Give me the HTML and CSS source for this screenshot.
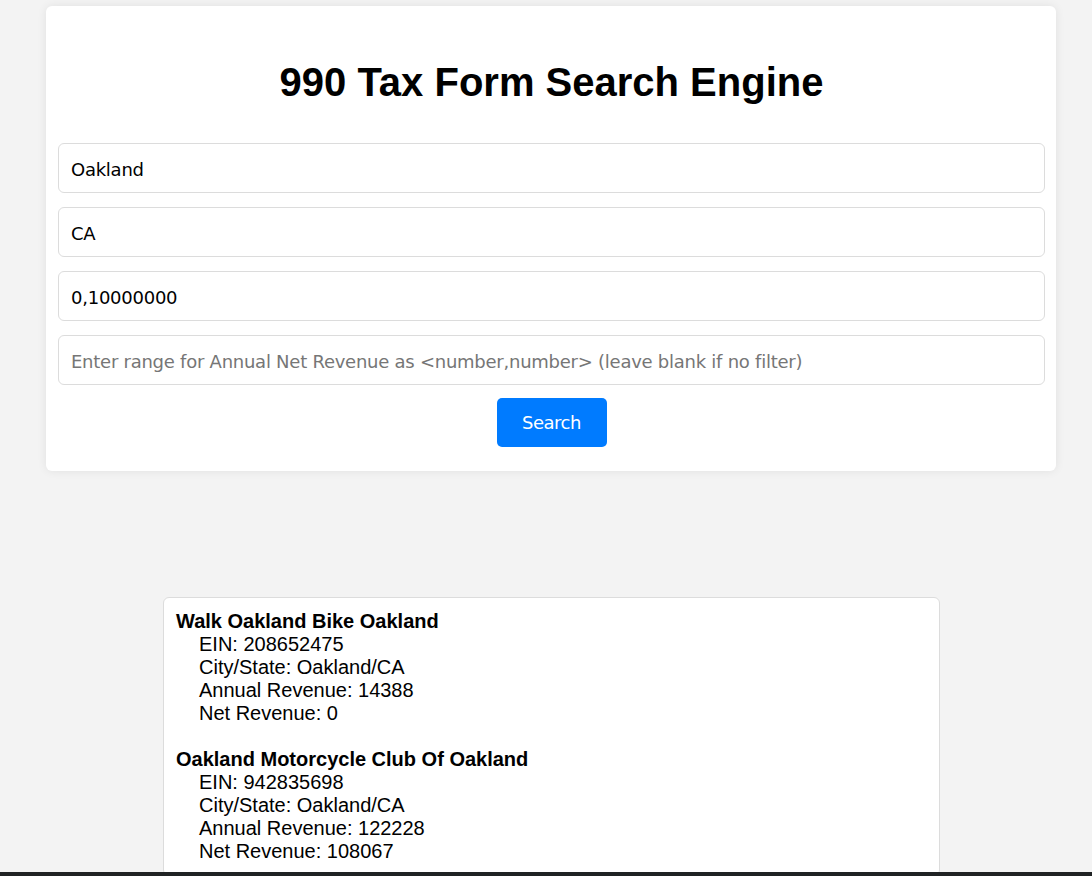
FILE: index.html
```html
<!DOCTYPE html>
<html lang="en">
<head>
<meta charset="utf-8">
<title>990 Tax Form Search Engine</title>
<link rel="stylesheet" href="styles.css">
</head>
<body>
<div class="page">
  <div class="card">
    <h1 class="title">990 Tax Form Search Engine</h1>
    <form class="search-form">
      <input class="field" type="text" value="Oakland">
      <input class="field" type="text" value="CA">
      <input class="field" type="text" value="0,10000000">
      <input class="field" type="text" placeholder="Enter range for Annual Net Revenue as &lt;number,number&gt; (leave blank if no filter)">
      <button class="search-btn" type="button">Search</button>
    </form>
  </div>
  <div class="results">
    <div class="entry">
      <div class="entry-name">Walk Oakland Bike Oakland</div>
      <div class="entry-line">EIN: 208652475</div>
      <div class="entry-line">City/State: Oakland/CA</div>
      <div class="entry-line">Annual Revenue: 14388</div>
      <div class="entry-line">Net Revenue: 0</div>
    </div>
    <div class="entry">
      <div class="entry-name">Oakland Motorcycle Club Of Oakland</div>
      <div class="entry-line">EIN: 942835698</div>
      <div class="entry-line">City/State: Oakland/CA</div>
      <div class="entry-line">Annual Revenue: 122228</div>
      <div class="entry-line">Net Revenue: 108067</div>
    </div>
  </div>
</div>
<div class="bottom-bar"></div>
</body>
</html>
```
FILE: styles.css
```css
html, body {
  margin: 0;
  padding: 0;
}
body {
  background: #f3f3f3;
  font-family: "Liberation Sans", Arial, sans-serif;
  color: #000;
}
.page {
  padding-top: 6px;
  display: flex;
  flex-direction: column;
  align-items: center;
  padding-left: 10px;
}
.card {
  width: 1010px;
  box-sizing: border-box;
  background: #fff;
  border-radius: 6px;
  box-shadow: 0 0 10px rgba(0, 0, 0, 0.08);
  padding: 12px 11px 24px 12px;
}
.title {
  margin: 41px 0 38px;
  font-size: 40px;
  font-weight: bold;
  text-align: center;
  line-height: 46px;
}
.search-form {
  display: flex;
  flex-direction: column;
  align-items: center;
  gap: 14px;
}
.field {
  width: 100%;
  height: 50px;
  box-sizing: border-box;
  border: 1px solid #dcdcdc;
  border-radius: 6px;
  padding: 3px 12px 0;
  font-family: "DejaVu Sans", Verdana, sans-serif;
  font-size: 18px;
  letter-spacing: -0.25px;
  color: #000;
  background: #fff;
  outline: none;
}
.field::placeholder {
  color: #767676;
}
.search-btn {
  margin-top: -1px;
  width: 110px;
  height: 49px;
  border: none;
  border-radius: 5px;
  background: #007bff;
  color: #fff;
  font-family: "DejaVu Sans", Verdana, sans-serif;
  font-size: 18px;
  letter-spacing: -0.5px;
  cursor: pointer;
}
.results {
  margin-top: 126px;
  width: 777px;
  box-sizing: border-box;
  background: #fff;
  border: 1px solid #dcdcdc;
  border-radius: 6px;
  padding: 12px 12px 12px;
  font-size: 20px;
  line-height: 23px;
  margin-left: 1px;
}
.entry + .entry {
  margin-top: 23px;
}
.entry-name {
  font-weight: bold;
}
.entry-line {
  padding-left: 23px;
}
.bottom-bar {
  position: fixed;
  left: 0;
  right: 0;
  bottom: 0;
  height: 4px;
  background: #202324;
}
```
